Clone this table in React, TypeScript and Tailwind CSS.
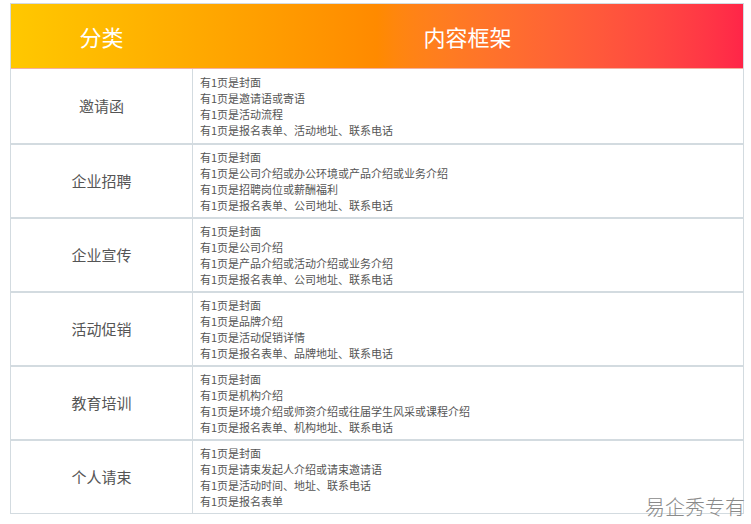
const ROWS: { name: string; items: string[] }[] = [
  {
    name: '邀请函',
    items: ['有1页是封面', '有1页是邀请语或寄语', '有1页是活动流程', '有1页是报名表单、活动地址、联系电话'],
  },
  {
    name: '企业招聘',
    items: ['有1页是封面', '有1页是公司介绍或办公环境或产品介绍或业务介绍', '有1页是招聘岗位或薪酬福利', '有1页是报名表单、公司地址、联系电话'],
  },
  {
    name: '企业宣传',
    items: ['有1页是封面', '有1页是公司介绍', '有1页是产品介绍或活动介绍或业务介绍', '有1页是报名表单、公司地址、联系电话'],
  },
  {
    name: '活动促销',
    items: ['有1页是封面', '有1页是品牌介绍', '有1页是活动促销详情', '有1页是报名表单、品牌地址、联系电话'],
  },
  {
    name: '教育培训',
    items: ['有1页是封面', '有1页是机构介绍', '有1页是环境介绍或师资介绍或往届学生风采或课程介绍', '有1页是报名表单、机构地址、联系电话'],
  },
  {
    name: '个人请束',
    items: ['有1页是封面', '有1页是请束发起人介绍或请束邀请语', '有1页是活动时间、地址、联系电话', '有1页是报名表单'],
  },
];

const FONT = { fontFamily: '"Noto Sans CJK SC", "Noto Sans", sans-serif' };

export default function App() {
  return (
    <div className="relative w-[751px] h-[524px] bg-white overflow-hidden" style={FONT}>
      <div className="ml-[10px] mt-[3px] w-[734px] border border-[#d3dbe0]">
        <div className="grid grid-cols-[181px_1fr] h-[65px] bg-gradient-to-r from-[#ffc800] via-[#ff8a00] to-[#ff2548] text-white text-[22px] border-b border-[#f3b0a0]">
          <div className="flex items-center justify-center">分类</div>
          <div className="flex items-center justify-center">内容框架</div>
        </div>
        {ROWS.map((row, i) => (
          <div
            key={row.name}
            className={`grid grid-cols-[181px_1fr] h-[74px] ${i > 0 ? 'border-t-2 border-[#d3dbe0]' : ''}`}
          >
            <div className="flex items-center justify-center text-[15px] text-[#555]">{row.name}</div>
            <div className="flex flex-col justify-center border-l border-[#d3dbe0] pl-[7px] text-[11px] leading-[16px] text-[#555]">
              {row.items.map((t) => (
                <div key={t}>{t}</div>
              ))}
            </div>
          </div>
        ))}
      </div>
      <div className="absolute right-[6px] bottom-[2px] text-[20px] font-light text-[#8a8a8a]">易企秀专有</div>
    </div>
  );
}
